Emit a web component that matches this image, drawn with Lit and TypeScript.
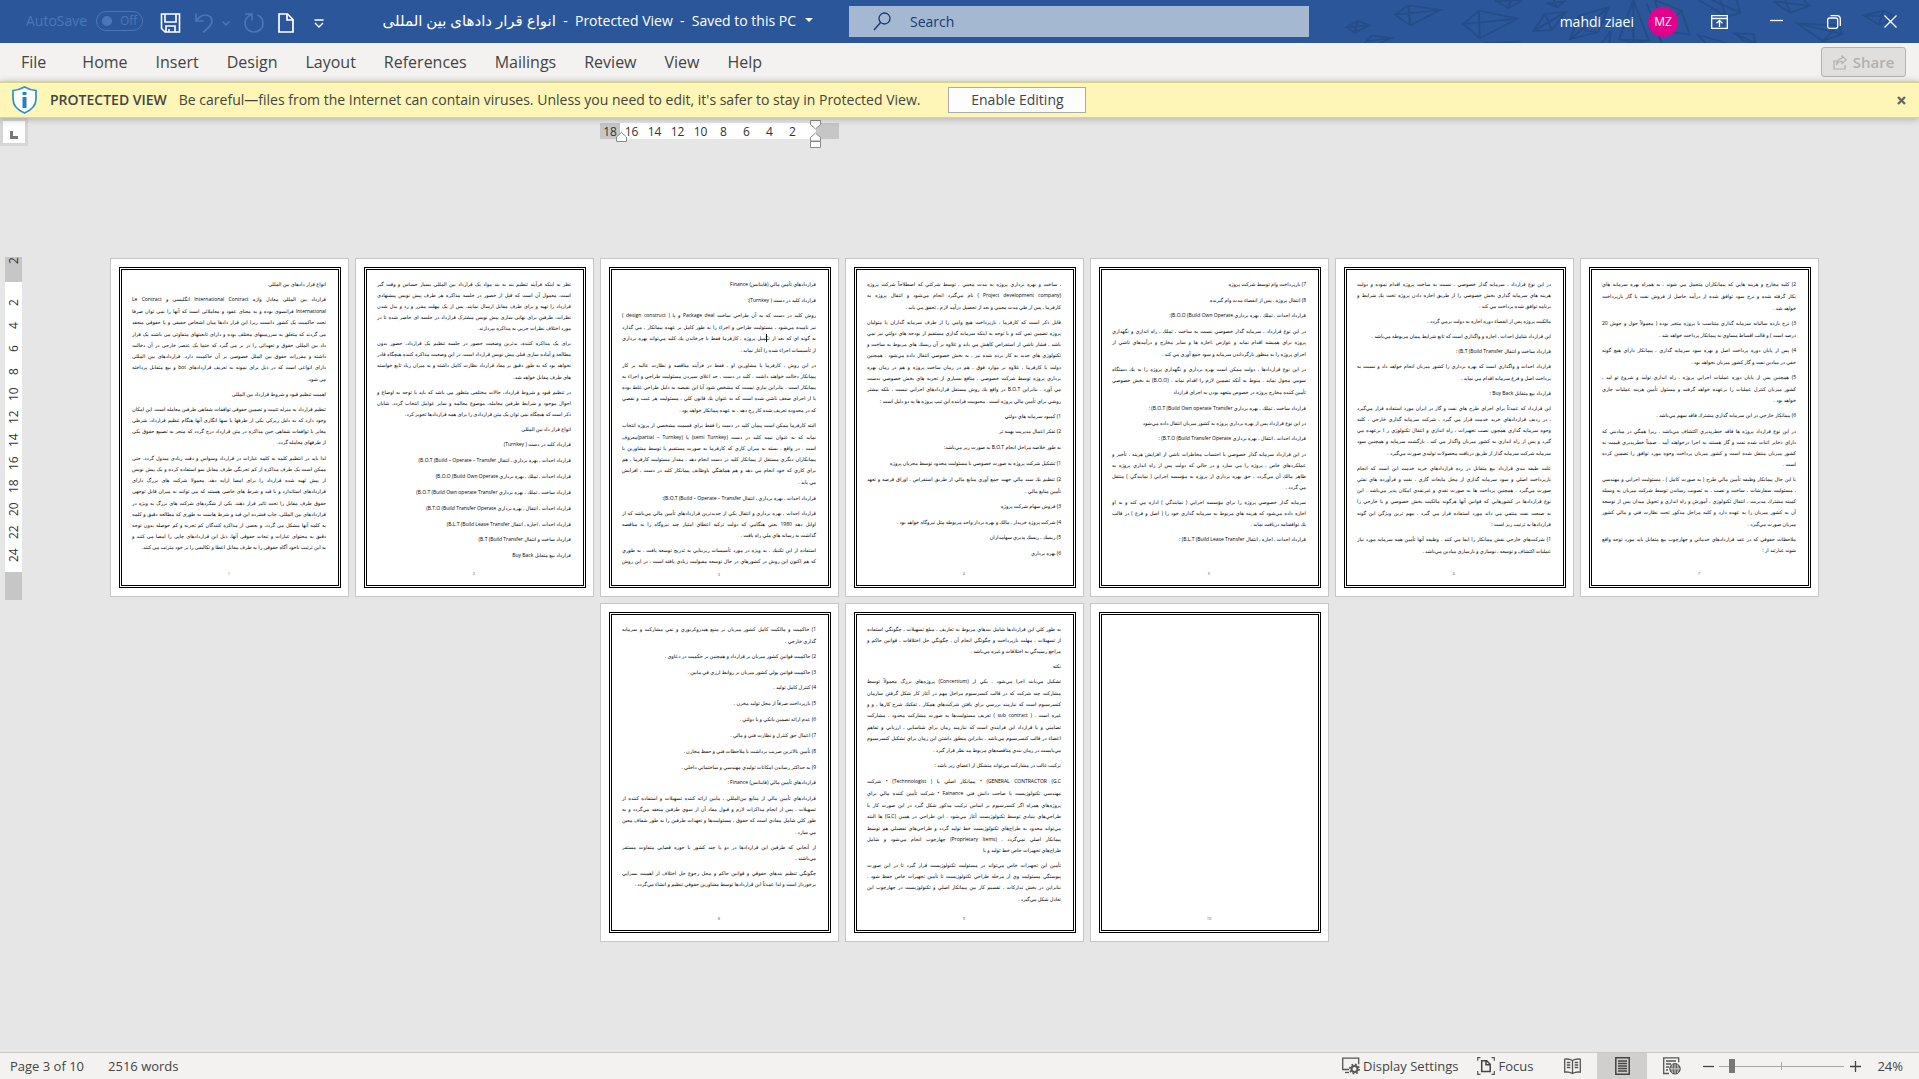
import { LitElement, html, css, svg } from "lit";
import { customElement, property } from "lit/decorators.js";
import { classMap } from "lit/directives/class-map.js";

/*
 * Page text. Every array entry is a paragraph, every row of it one line.
 * A leading "+" on a paragraph widens the space above it, a leading "~" marks a taller line.
 * "}" stands for a closing bracket that keeps the right-to-left direction.
 * A trailing "=" justifies the last line, for a paragraph that runs on to the next page.
 */
const PAGES: string[][] = [
  [
    `انواع قرار دادهای بین المللی`,
    `قرارداد بین المللی معادل واژه  International Contract  انگلیسی و  Le Contract
~International فرانسوی بوده و به  معنای عقود و معاملاتی است که آنها را نمی توان صرفا
تحت حاکمیت یک کشور دانست زیرا این قرار دادها میان اشخاص حقیقی و یا حقوقی منعقد
~می گردند که متعلق به سرزمینهای مختلف بوده و دارای تابعیتهای متفاوتی می باشند یک قرار
داد بین المللی حقوق و تعهداتی را در بر می گیرد که  حتما یک عنصر خارجی در آن دخالت
داشته و  مقررات حقوق بین الملل خصوصی  بر آن حاکمیت دارد. قراردادهای بین المللی
دارای انواعی است که در ذیل  برای نمونه به تعریف قراردادهای bot و بیع متقابل پرداخته
~می شود.`,
    `اهمیت تنظیم قیود و شروط قرارداد بین المللی`,
    `تنظیم قرارداد به منزله تثبیت و تضمین حقوقی توافقات شفاهی طرفین معامله است. این امکان
وجود دارد که به دلیل زیرکی یکی از طرفها یا سها انگاری آنها هنگام تنظیم قرارداد، شرطی
مغایر با توافقات شفاهی حین مذاکره در متن قرارداد درج گردد که منجر به تضییع حقوق یکی
از طرفهای معامله گردد.`,
    `+لذا باید در انتظیم کلمه به کلمه عبارات در قرارداد وسواس و دقت زیادی مبذول گردد. حتی
ممکن است یک طرف مذاکره از کم تجربگی طرف مقابل سو استفاده کرده و یک پیش نویس
از پیش تهیه شده قرارداد را برای امضا ارایه دهد. معمولا شرکت های بزرگ دارای
قراردادهای استاندارد و با قید و شرط های خاصی هستند که می توانند به میزان قابل توجهی
~حقوق طرف مقابل را تحت تاثیر قرار دهند. یکی از شگردهای شرکت های بزرگ به ویژه در
قراردادهای بین المللی، چاپ فشرده این قید و شرط هاست به طوری که مطالعه دقیق و کلمه
به کلمه آنها مشکل می گردد. و بعضی از مذاکره کنندگان کم تجربه و کم حوصله بدون توجه
دقیق به محتوای عبارات و تبعات حقوقی آنها، ذیل این قراردادهای چاپی را امضا می کنند و
به این ترتیب ناخود آگاه حقوقی را به طرف مقابل اعطا و تکالیفی را بر خود مترتب می کنند.`,
  ],
  [
    `نظر به اینکه فرآیند تنظیم بند به بند مواد یک قرارداد بین المللی بسیار حساس و وقت گیر
است، معمول آن است که قبل از حضور در جلسه مذاکره هر طرف پیش نویس پیشنهادی
قرارداد را تهیه و برای طرف مقابل ارسال نمایند. پس از یک مهلت مقرر و رد و بدل شدن
نظرات، طرفین برای نهایی سازی پیش نویس مشترک قرارداد در جلسه ای حاضر شده تا در
مورد اختلاف نظرات جزیی به مذاکره بپردازند.`,
    `برای یک مذاکره کننده، بدترین وضعیت حضور در جلسه تنظیم یک قرارداد، حضور بدون
مطالعه و آماده سازی قبلی پیش نویس قرارداد است. در این وضعیت مذاکره کننده هیچگاه قادر
نخواهد بود که به طور دقیق بر مفاد قرارداد نظارت کامل داشته و به میزان زیاد تابع خواسته
~های طرف مقابل خواهد شد.`,
    `در تنظیم قیود و شروط قرارداد، حالات مختلفی متظور می باشد که باید با توجه به اوضاع و
احوال موجود و شرایط طرفین معامله، موضوع معالمه و سایر عوامل انتخاب گردد. شایان
ذکر است که هیچگاه نمی توان یک متن قراردادی را برای همه قراردادها تجویز کرد.`,
    `انواع قرار داد بین المللی`,
    `قرارداد كليد در دست ( Turnkey)`,
    `+قرارداد احداث , بهره برداري , انتقال  B.O.T (Build – Operate – Transfer}`,
    `+قرارداد احداث , تملك , بهره برداري  B.O.O (Build Own Operate}`,
    `+قرارداد ساخت , تملك , بهره برداري B.O.T (Build Own operate Transfer}`,
    `+قرارداد احداث , انتقال , بهره برداري B.T.O (Build Transfer Operate}`,
    `+قرارداد احداث , اجاره , انتقال B.L.T (Build Lease Transfer}`,
    `قرارداد ساخت و انتقال B.T (Build Transfer}`,
    `+قرارداد بيع متقابل Buy Back`,
  ],
  [
    `قراردادهاي تأمين مالي (فاينانس) Finance`,
    `+قرارداد كليد در دست ( Turnkey):`,
    `روش كليد در دست كه به آن طراحي  ساخت  Package deal و يا ( design construct )
~نيز ناميده مي‌شود , مسئوليت طراحي و اجراء را به طور كامل بر عهده پيمانكار , مي گذارد
به گونه اي كه بعد از تكميل پروژه , كارفرما فقط با چرخاندن يك كليد مي‌تواند بهره برداري
~از تأسيسات اجراء شده را آغاز نمايد .`,
    `در اين روش , كارفرما يا مشاورين او , فقط در فرآيند مناقصه و نظارت عاليه بر كار
پيمانكار دخالت خواهند داشت . كليد در دست , حد اعلاي سپردن مسئوليت طراحي و اجراء به
پيمانكار است . بنابراين نيازي نيست كه مشخص شود آيا اين نقيصه به دليل طراحي غلط بوده
يا از اجراي ضعف ناشي شده است كه به عنوان يك قانون كلي , مسئوليت هر عيب و نقصي
~كه در محدوده تعريف شده كار رخ دهد , به عهده پيمانكار خواهد بود .`,
    `البته كارفرما ممكن است پيمان كليد در دست را فقط براي قسمت مشخصي از پروژه انتخاب
~نمايد كه به عنوان نيمه كليد در دست  (semi Turnkey) يا (partial – Turnkey)معروف
است . در واقع , بسته به ميزان كاري كه كارفرما به صورت مستقيم يا توسط مشاورين يا
پيمانكاران ديگري مستقل از پيمانكار كليد در دست انجام دهد , مقدار مسئوليت كارفرما , هم
براي كاري كه خود انجام مي دهد و هم هماهنگي باوظايف پيمانكار كليد در دست , افزايش
~مي يابد .`,
    `+قرارداد احداث , بهره برداري , انتقال B.O.T (Build – Operate – Transfer}:`,
    `قرارداد احداث , بهره برداري و انتقال يكي از جديدترين قراردادهاي تأمين مالي مي‌باشد كه از
اوايل دهه 1980 يعني هنگامي كه دولت تركيه اعطاي امتياز چند نيروگاه را به مناقصه
گذاشت به رسانه هاي ملي راه يافت .`,
    `استفاده از اين تكنيك , به ويژه در مورد تأسيسات زيربنايي به تدريج توسعه يافت . به طوري
كه هم اكنون اين روش در كشورهاي در حال توسعه مقبوليت زيادي يافته است . در اين روش=`,
  ],
  [
    `, ساخت و بهره برداري پروژه به مدت معيني , توسط شركتي كه اصطلاحاً شركت پروژه
(Project development company ) نام مي‌گيرد انجام مي‌شود و انتقال پروژه به
~كارفرما , پس از طي مدت معيني و بعد از تحصيل درآمد لازم , تحقق مي يابد .`,
    `قابل ذكر است كه كارفرما , بازپرداخت هيچ وامي را از طرف سرمايه گذاران يا متوليان
پروژه تضمين نمي كند و با توجه به اينكه سرمايه گذاري مستقيم از بودجه هاي دولتي نيز نمي
باشد , فشار ناشي از استقراض كاهش مي يابد و علاوه بر آن ريسك هاي مربوط به ساخت و
تكنولوژي هاي جديد به كار برده شده نيز , به بخش خصوصي انتقال داده مي‌شود . همچنين
~دولت يا كارفرما , علاوه بر موارد فوق , هم در زمان ساخت پروژه و هم در زمان بهره
برداري پروژه توسط شركت خصوصي , منافع بسياري از تجربه هاي بخش خصوصي بدست
مي آورد . بنابراين B.O.T در واقع يك روش مستقل قراردادهاي اجرايي نيست , بلكه بيشتر
~روشي براي تأمين مالي پروژه است . محبوبيت فزاينده اين تيپ پروژه ها به دو دليل است :`,
    `1) كمبود سرمايه هاي دولتي`,
    `2) تفكر اعمال مديريت بهينه تر`,
    `+به طور خلاصه مراحل انجام B.O.T به صورت زير مي‌باشد:`,
    `+1) تشكيل شركت پروژه به صورت خصوصي با مسئوليت محدود توسط مجريان پروژه`,
    `+2) تنظيم يك سند مالي جهت جمع آوري منابع مالي از طريق استقراض , اوراق قرضه و تعهد
~تأمين منابع مالي .`,
    `3) فروش سهام شركت پروژه`,
    `+4) شركت پروژه خريدار , مالك و بهره بردار واحد مربوطه مثل نيروگاه خواهد بود .`,
    `5) ريسك , ريسك پذيري سهامداران`,
    `+6) بهره برداري`,
  ],
  [
    `7) بازپرداخت وام توسط شركت پروژه`,
    `+8) انتقال پروژه , پس از انقضاء مدت وام گيرنده`,
    `قرارداد احداث , تملك , بهره برداري B.O.O (Build Own Operate}:`,
    `+در اين نوع قرارداد , سرمايه گذار خصوصي نسبت به ساخت , تملك , راه اندازي و نگهداري
پروژه براي هميشه اقدام نمايد و عوارض ,اجاره ها و ساير مخارج و درآمدهاي ناشي از
~اجراي پروژه را به منظور بازگرداندن سرمايه و سود جمع آوري مي كند .`,
    `در اين نوع قراردادها , دولت ممكن است بهره برداري و نگهداري پروژه را به يك دستگاه
سومي محول نمايد . منوط به آنكه تضمين لازم را اقدام نمايد . (B.O.O) به بخش خصوصي
~تأمين كننده مخارج پروژه در خصوص متعهد بودن به اجراي قرارداد`,
    `+قرارداد ساخت , تملك , بهره برداري B.O.T (Build Own operate Transfer} :`,
    `در اين نوع قرارداد پس از بهره برداري پروژه به كشور ميزبان انتقال داده مي‌شود`,
    `قرارداد احداث , انتقال , بهره برداري B.T.O (Build Transfer Operate} :`,
    `+در اين قرارداد سرمايه گذار خصوصي با احتساب مخاطرات ناشي از افزايش هزينه , تأخير و
عملكردهاي خاص , پروژه را مي سازد و در حالي كه دولت پس از راه اندازي پروژه به
ظاهر مالك آن مي‌گردد , حق بهره برداري از پروژه به مؤسسه اجرايي ( نمايندگي ) منتقل
مي گردد .`,
    `سرمايه گذار خصوصي پروژه را براي مؤسسه اجرايي ( نمايندگي ) اداره مي كند و به او
اجازه داده مي‌شود كه هزينه هاي مربوط به سرمايه گذاري خود را ( اصل و فرع ) در قالب
يك توافقنامه دريافت نمايد .`,
    `قرارداد احداث , اجاره , انتقال B.L.T (Build Lease Transfer} :`,
  ],
  [
    `در اين نوع قرارداد , سرمايه گذار خصوصي , نسبت به ساخت پروژه اقدام نموده و دولت
هزينه هاي سرمايه گذاري بخش خصوصي را از طريق اجاره دادن پروژه تحت يك شرايط و
برنامه توافق شده پرداخت مي كند .`,
    `مالكيت پروژه پس از انقضاء دوره اجاره به دولت برمي گردد .`,
    `اين قرارداد شامل احداث , اجاره و واگذاري است كه تابع شرايط پيمان مربوطه مي‌باشد .`,
    `قرارداد ساخت و انتقال B.T (Build Transfer} :`,
    `قرارداد احداث و واگذاري است كه بهره برداري را كشور ميزبان انجام خواهد داد و نسبت به
~پرداخت اصل و فرع سرمايه اقدام مي نمايد .`,
    `قرارداد بيع متقابل Buy Back :`,
    `اين قرارداد كه عمدتاً براي اجراي طرح هاي نفت و گاز در ايران مورد استفاده قرار مي‌گيرد
, در رديف قراردادهاي خريد خدمت قرار مي گيرد , شركت سرمايه گذاري خارجي , كليه
وجوه سرمايه گذاري همچون نصب تجهيزات , راه اندازي و انتقال تكنولوژي ر ا برعهده مي
گيرد و پس از راه اندازي به كشور ميزبان واگذار مي كند . بازگشت سرمايه و همچنين سود
~سرمايه شركت سرمايه گذار از طريق دريافت محصولات توليدي صورت مي‌گيرد .`,
    `علت طبقه بندي قرارداد بيع متقابل در رده قراردادهاي خريد خدمت اين است كه انجام
بازپرداخت اصلي و سود سرمايه گذاري از محل مايعات گازي , نفت و فرآورده هاي نفتي
صورت مي‌گيرد . همچنين پرداخت ها به صورت نقدي و غيرنقدي امكان پذير مي‌باشد . اين
نوع قراردادها در كشورهايي كه قوانين آنها هرگونه مالكيت بخش خصوصي و يا خارجي را
~به صنعت نفت منتفي مي داند مورد استفاده قرار مي گيرد . مهم ترين ويژگي اين گونه
قراردادها به ترتيب زير است :`,
    `1) شركت‌هاي خارجي نقش پيمانكار را ايفا مي كنند . وظيفه آنها تأمين همه سرمايه مورد نياز
~عمليات اكتشاف و توسعه , نوسازي و بازسازي ميادين مي‌باشد .`,
  ],
  [
    `2) كليه مخارج و هزينه هايي كه پيمانكاران متحمل مي شوند , به همراه بهره سرمايه هاي
~بكار گرفته شده و نرخ سود توافق شده از درآمد حاصل از فروش نفت يا گاز بازپرداخت
~خواهد شد .`,
    `3) نرخ بازده ساليانه سرمايه گذاري متناسب با پروژه متغير بوده ( معمولاً حول و حوش 20
~درصد است ) و قالب اقساط مساوي به پيمانكار پرداخت خواهد شد .`,
    `4) پس از پايان دوره پرداخت اصل و بهره سود سرمايه گذاري , پيمانكار داراي هيچ گونه
~حقي در ميادين نفت و گاز كشور ميزبان نخواهد بود .`,
    `5) همچنين پس از پايان دوره عمليات اجرايي پروژه , راه اندازي توليد و شروع تو ليد ,
~كشور ميزبان كنترل عمليات را برعهده خواهد گرفت و مسئول تأمين هزينه عمليات جاري
خواهد بود .`,
    `6) پيمانكار خارجي در اين سرمايه گذاري مشترك فاقد سهم مي‌باشد .`,
    `+در اين نوع قرارداد پروژه ها فاقد خطرپذيري اكتشاف مي‌باشد . زيرا همگي در مياديني كه
داراي ذخاير اثبات شده نفت و گاز هستند به اجرا درخواهند آمد . ضمناً خطرپذيري قيمت به
كشور ميزبان منتقل شده است و كشور ميزبان پرداخت وجوه مورد توافق را تضمين كرده
است .`,
    `با اين حال پيمانكار وظيفه تأمين مالي طرح ( به صورت كامل ) , مسئوليت اجرايي و مهندسي
, مسئوليت سفارشات , ساخت و نصب , به تصويب رساندن توسط شركت ميزبان به وسيله
كميته مشترك مديريت , انتقال تكنولوژي , آموزش و راه اندازي و تحويل ميدان پس از توسعه
آن به كشور ميزبان را به عهده دارد و كليه مراحل مذكور تحت نظارت فني و مالي كشور
~ميزبان صورت مي‌گيرد .`,
    `ملاحظات حقوقي كه در عقد قراردادهاي خدماتي و چهارچوب بيع متقابل بايد مورد توجه واقع
شوند عبارتند از :`,
  ],
  [
    `1) حاكميت و مالكيت كامل كشور ميزبان بر منبع هيدروكربوري و نفي مشاركت و سرمايه
~گذاري خارجي .`,
    `2) حاكميت قوانين كشور ميزبان بر قرارداد و همچنين بر حكميت در دعاوي .`,
    `+3) حاكميت قوانين پولي كشور ميزبان بر روابط ارزي في مابين .`,
    `4) كنترل كامل توليد .`,
    `+5) بازپرداخت صرفاً از محل توليد مخزن .`,
    `+6) عدم ارائه تضمين بانكي و يا دولتي .`,
    `+7) اعمال حق كنترل و نظارت فني و مالي .`,
    `+8) تأمين بالاترين ضريب برداشت با ملاحظات فني و حفظ مخازن .`,
    `+9) به حداكثر رساندن امكانات توليدي مهندسي و ساختماني داخلي .`,
    `قراردادهاي تأمين مالي (فاينانس) Finance :`,
    `+قراردادهاي تأمين مالي از منابع بين‌المللي , مابين ارائه كننده تسهيلات و استفاده كننده از
تسهيلات , پس از انجام مذاكرات لازم و قبول مفاد آن از سوي طرفين منعقد مي‌گردد و به
طور كلي شامل مفادي است كه حقوق , مسئوليت‌ها و تعهدات طرفين را به طور شفاف معين
~مي سازد .`,
    `از آنجايي كه طرفين اين قراردادها در دو يا چند كشور با حوزه قضايي متفاوت مستقر
مي‌باشند .`,
    `چگونگي تنظيم بندهاي حقوقي و قوانين حاكم و محل رجوع حل اختلاف از اهميت بسزايي
برخوردار است و لذا عمدتاً اين قراردادها توسط مشاورين حقوقي تنظيم و انشاء مي‌گردد .`,
  ],
  [
    `به طور كلي اين قراردادها شامل بندهاي مربوط به تعاريف , مبلغ تسهيلات , چگونگي استفاده
از تسهيلات , مهلت بازپرداخت و چگونگي انجام آن , چگونگي حل اختلافات , قوانين حاكم و
مراجع رسيدگي به اختلافات و غيره مي‌باشد .`,
    `نكته`,
    `تشكيل مي‌يابند اجرا مي‌شود . يكي از (Concertium) پروژه‌هاي بزرگ معمولاً توسط
~مشاركت چند شركت كه در قالب كنسرسيوم مراحل مهم در آغاز كار شكل گرفتن سازمان
كنسرسيوم است كه نيازمند بررسي براي يافتن شركت‌هاي همكار , تفكيك شرح كارها , و و
غيره است . ( sub contract ) تعريف مسئوليت‌ها به صورت مشاركت محدود , مشاركت
~تضامني و يا قرارداد اين فرايندي است كه نيازمند زمان براي شناسايي , ارزيابي و تفاهم
اعضاء در قالب كنسرسيوم مي‌باشد . بنابراين منظور داشتن اين زمان براي تشكيل كنسرسيوم
~مي‌بايست در زمان بندي مناقصه‌هاي مربوط مد نظر قرار گيرد .`,
    `تركيب غالب در مشاركت مي‌تواند متشكل از اعضاي زير باشد :`,
    `+GENERAL CONTRACTOR (G.C} • پيمانكار اصلي يا ( Technnologist) • شركت
~مهندسي تكنولوژيست يا صاحب دانش فني Fainance • شركت تأمين كننده مالي براي
~پروژه‌هاي همراه اگر كنسرسيوم بر اساس تركيب مذكور شكل گيرد در اين صورت كار با
طراحي‌هاي بنيادي توسط تكنولوژيست آغاز مي‌شود . اين طراحي در همين (G.C) ها البته
~مي‌تواند محدود به طراح‌هاي تكنولوژيست خط توليد گردد و طراحي‌هاي تفضيلي هم توسط
پيمانكار اصلي نمي‌گردد . (Proprietary Items) چهارچوب انجام مي‌شود و شامل
طراح‌هاي تجهيزات خاص خط توليد و يا`,
    `تأمين اين تجهيزات خاص مي‌تواند در مسئوليت تكنولوژيست قرار گيرد تا در اين صورت
پيوستگي مسئوليت وي از مرحله طراحي تكنولوژيست تا تأمين تجهيزات خاص حفظ شود .
بنابراين در بخش تداركات , تقسيم كار بين پيمانكار اصلي و تكنولوژيست در چهارچوب اين
~تعادل شكل مي‌گيرد .`,
  ],
  [],
];

const CARET_PAGE = 3;

const icons = {
  save: svg`<svg width="21" height="20" viewBox="0 0 20 20"><path d="M1 1h18v18H4.500L1 15.500zM4.500 1v8h11V1M5.500 19v-6h9v6M8.500 16v3" fill="none" stroke="#fff" stroke-width="1.600"/></svg>`,
  undo: svg`<svg width="18" height="20" viewBox="0 0 18 20"><path d="M1 .5V8h7.500M1 8C4 4 7 2 10.500 2c4 0 6.500 3 6.500 6.500 0 4-4.500 7-9 11" fill="none" stroke="#4a77b8" stroke-width="1.700"/></svg>`,
  chevron: svg`<svg width="8" height="5" viewBox="0 0 8 5"><path d="M.5.5L4 4 7.500.5" fill="none" stroke="#4a77b8" stroke-width="1.500"/></svg>`,
  redo: svg`<svg width="20" height="20" viewBox="0 0 20 20"><path d="M1 1h7v6.500M8 1.500C3.500 3 1 6.500 1 10.500 1 15.500 5 19 10 19s9-3.500 9-8.500c0-4-2-7-5.500-8.500" fill="none" stroke="#4a77b8" stroke-width="1.700"/></svg>`,
  page: svg`<svg width="16" height="20" viewBox="0 0 16 20"><path d="M1 1h8.500L15 6.500V19H1zM9 1v6h6" fill="none" stroke="#fff" stroke-width="1.700"/></svg>`,
  more: svg`<svg width="10" height="9" viewBox="0 0 10 9"><path d="M.5 1h9M1 4l4 4 4-4" fill="none" stroke="#fff" stroke-width="1.400"/></svg>`,
  search: svg`<svg width="18" height="19" viewBox="0 0 18 19"><circle cx="11.500" cy="6.500" r="5.500" fill="none" stroke="#173a72" stroke-width="1.300"/><path d="M7.500 10.500L1 18" stroke="#173a72" stroke-width="1.400"/></svg>`,
  ribbon: svg`<svg width="17" height="14" viewBox="0 0 17 14"><path d="M.7.700h15.600v12.600H.7zM.7 3.500h15.600M8.500 12V5.500M5.500 8.200l3-2.800 3 2.800" fill="none" stroke="#fff" stroke-width="1.300"/></svg>`,
  minimize: svg`<svg width="13" height="13" viewBox="0 0 13 13"><path d="M0 5.500h13" stroke="#fff" stroke-width="1.300"/></svg>`,
  restore: svg`<svg width="14" height="14" viewBox="0 0 14 14"><rect x=".7" y="3" width="10" height="10.300" rx="2" fill="none" stroke="#fff" stroke-width="1.300"/><path d="M3.500.7H10q3.300 0 3.300 3.300v7" fill="none" stroke="#fff" stroke-width="1.300"/></svg>`,
  close: svg`<svg width="13" height="13" viewBox="0 0 13 13"><path d="M.5.5l12 12M12.500.5l-12 12" stroke="#fff" stroke-width="1.300"/></svg>`,
  share: svg`<svg width="14" height="15" viewBox="0 0 14 15"><path d="M4 6H1v8h11v-4" fill="none" stroke="#b1afad" stroke-width="1.200"/><path d="M9 1l4.300 3.800L9 8.500V6.300Q5.500 6.200 3.500 10 4 4 9 3.400z" fill="none" stroke="#b1afad" stroke-width="1.100"/></svg>`,
  shield: svg`<svg width="25" height="28" viewBox="0 0 25 28"><path d="M12.500 1Q18 4 24 4.500V13q0 9-11.500 14Q1 22 1 13V4.500Q7 4 12.500 1z" fill="#fff" stroke="#2b8fd0" stroke-width="1.700"/><path d="M12.500 6v3M12.500 11v11" stroke="#1e83c8" stroke-width="4"/></svg>`,
  dismiss: svg`<svg width="9" height="9" viewBox="0 0 9 9"><path d="M1 1l7 7M8 1L1 8" stroke="#666" stroke-width="2.400"/></svg>`,
  corner: svg`<svg width="8" height="8" viewBox="0 0 8 8"><path d="M1.500 0v6.500H8" fill="none" stroke="#777" stroke-width="3"/></svg>`,
  indent: svg`<svg width="11" height="10" viewBox="0 0 11 10"><path d="M.5 9.500V5l5-4.500 5 4.500v4.500z" fill="#fff" stroke="#8a8a8a"/></svg>`,
  indentPair: svg`<svg width="11" height="28" viewBox="0 0 11 28"><path d="M.5.5h10V4.500l-5 4.500-5-4.500zM.5 21V17.500l5-4.500 5 4.500V21zM.5 21.500h10v6H.5z" fill="#fff" stroke="#8a8a8a"/></svg>`,
  display: svg`<svg width="18" height="18" viewBox="0 0 18 18"><path d="M7 12.500H.7V1.200h16v6" fill="none" stroke="#555" stroke-width="1.300"/><path d="M3 15.500h4" stroke="#555" stroke-width="1.300"/><circle cx="12.500" cy="12" r="3" fill="none" stroke="#555" stroke-width="2"/><circle cx="12.500" cy="12" r="4.600" fill="none" stroke="#555" stroke-width="1.700" stroke-dasharray="1.800 1.800"/></svg>`,
  focus: svg`<svg width="18" height="18" viewBox="0 0 18 18"><path d="M3.500.7H.7v3M14.500.7h2.800v3M.7 14v3.300h2.800M17.300 14v3.300h-2.800" fill="none" stroke="#555" stroke-width="1.200"/><path d="M4.700 3.700h5l3.500 3.500v7.300H4.700zM9 3.700v4h4" fill="none" stroke="#444" stroke-width="1.500"/></svg>`,
  read: svg`<svg width="17" height="17" viewBox="0 0 17 17"><path d="M8.500 2.500Q5 .5.700 1.200v13Q5 13.500 8.500 15.500 12 13.500 16.300 14.200v-13Q12 .5 8.500 2.500zv13.500" fill="none" stroke="#555" stroke-width="1.300"/><path d="M2.800 4.500h3.500M2.800 7h3.500M2.800 9.500h3.500M10.700 4.500h3.500M10.700 7h3.500M10.700 9.500h3.500" stroke="#555" stroke-width="1.300"/></svg>`,
  print: svg`<svg width="15" height="18" viewBox="0 0 15 18"><path d="M.8.800h13.400v16.400H.8z" fill="none" stroke="#444" stroke-width="1.500"/><path d="M3 4h9M3 6.500h9M3 9h9M3 11.500h9M3 14h9" stroke="#444" stroke-width="1.300"/></svg>`,
  web: svg`<svg width="18" height="18" viewBox="0 0 18 18"><path d="M6 16.500H.7V.8h15v4.500M3 4h10M3 7h5M3 10h3M3 13h2" fill="none" stroke="#555" stroke-width="1.300"/><circle cx="12" cy="11.800" r="5.200" fill="#666" stroke="#444"/><path d="M7 11.800h10M12 6.800v10M9.500 7.500q-1.500 4.500 0 8.600M14.500 7.500q1.500 4.500 0 8.600" fill="none" stroke="#e4e4e4" stroke-width=".8"/></svg>`,
  minus: svg`<svg width="11" height="11" viewBox="0 0 11 11"><path d="M0 5.500h11" stroke="#444" stroke-width="1.300"/></svg>`,
  plus: svg`<svg width="11" height="11" viewBox="0 0 11 11"><path d="M0 5.500h11M5.500 0v11" stroke="#444" stroke-width="1.300"/></svg>`,
};

@customElement("doc-sheet")
class DocSheet extends LitElement {
  @property({ attribute: false }) paragraphs: string[] = [];
  @property({ type: Number }) number = 1;

  static styles = css`
    :host {
      display: flex;
      box-sizing: border-box;
      width: 239px;
      height: 339px;
      padding: 8px 7px 8px 8px;
      border: 1px solid #c6c6c6;
      background: #fff;
    }
    .frame {
      flex: 1;
      min-width: 0;
      display: flex;
      flex-direction: column;
      position: relative;
      border: 3px double #000;
      padding: 9px 12px 7px 10px;
      font: 5px/11px "Open Sans", "DejaVu Sans", sans-serif;
      color: #000;
    }
    p {
      margin: 0 0 4px;
      white-space: nowrap;
    }
    p.wide {
      margin-top: 1px;
    }
    .line {
      display: block;
      white-space: normal;
      height: 11px;
    }
    .full {
      text-align: justify;
      text-align-last: justify;
    }
    .tall {
      height: 12px;
      line-height: 12px;
    }
    .number {
      margin-top: auto;
      font-size: 4px;
      line-height: 8px;
      text-align: center;
      color: #555;
    }
    .caret {
      position: absolute;
      left: 154px;
      top: 64px;
      width: 1px;
      height: 8px;
      background: #000;
    }
  `;

  private line(raw: string, last: boolean) {
    const tall = raw.startsWith("~");
    const open = raw.endsWith("=");
    const text = raw.replace(/[~=]/g, "").replace(/\}/g, "\u2067)\u2069");
    return html`<span class=${classMap({ line: true, tall, full: !last || open })}>${text}</span>`;
  }

  render() {
    return html`<div class="frame" dir="rtl" lang="fa">
      ${this.paragraphs.map((p) => {
        const rows = p.replace(/^\+/, "").split("\n");
        return html`<p class=${classMap({ wide: p.startsWith("+") })}>
          ${rows.map((r, i) => this.line(r, i === rows.length - 1))}
        </p>`;
      })}
      ${this.number === CARET_PAGE ? html`<span class="caret"></span>` : null}
      <span class="number">${this.number}</span>
    </div>`;
  }
}

@customElement("app-root")
class AppRoot extends LitElement {
  static styles = css`
    :host {
      display: flex;
      flex-direction: column;
      height: 100vh;
      overflow: hidden;
      background: #e6e6e6;
      color: #444;
      font: 14px/20px "Open Sans", "Noto Sans", "DejaVu Sans", sans-serif;
    }
    button {
      border: 0;
      padding: 0;
      background: none;
      color: inherit;
      font: inherit;
      display: flex;
      align-items: center;
      justify-content: center;
    }
    svg {
      display: block;
      flex: none;
    }
    .titlebar {
      position: relative;
      flex: none;
      display: grid;
      grid-template-columns: minmax(0, 849fr) minmax(0, 460fr) minmax(0, 610fr);
      align-items: center;
      height: 43px;
      background: #2b579a;
      color: #fff;
    }
    .pattern {
      position: absolute;
      right: 0;
      top: 0;
    }
    .quick {
      display: flex;
      align-items: center;
      padding: 0 36px 0 26px;
      white-space: nowrap;
    }
    .autosave {
      display: flex;
      align-items: center;
      gap: 9px;
      padding-bottom: 2px;
      color: #4a77b8;
    }
    .switch {
      box-sizing: border-box;
      width: 47px;
      height: 20px;
      border: 1px solid #4a77b8;
      border-radius: 10px;
      gap: 8px;
      font-size: 12px;
      line-height: 18px;
    }
    .knob {
      width: 10px;
      height: 10px;
      border-radius: 5px;
      background: #4a77b8;
    }
    .tools {
      display: flex;
      align-items: center;
      padding-top: 3px;
      margin-left: 17px;
    }
    .gap-s {
      margin-left: 9px;
    }
    .gap-m {
      margin-left: 14px;
    }
    .gap-l {
      margin-left: 20px;
    }
    .doc {
      margin-left: auto;
      display: flex;
      align-items: center;
      gap: 9px;
      white-space: pre;
      padding-bottom: 3px;
    }
    .doc bdi {
      font-size: 15px;
    }
    .down {
      border: 4px solid transparent;
      border-top-color: #fff;
      border-bottom: 0;
    }
    .search {
      position: relative;
      display: flex;
      align-items: center;
      gap: 19px;
      height: 31px;
      padding-left: 24px;
      background: #a5b8d1;
    }
    .search input {
      flex: 1;
      min-width: 0;
      border: 0;
      padding: 0;
      background: none;
      font: inherit;
      color: #173a72;
      outline: 0;
    }
    .search input::placeholder {
      color: #173a72;
      opacity: 1;
    }
    .account {
      position: relative;
      display: flex;
      align-items: center;
      justify-content: flex-end;
    }
    .avatar {
      width: 30px;
      height: 30px;
      margin-left: 14px;
      margin-right: 13px;
      border-radius: 50%;
      background: #e3008c;
      font-size: 12px;
      line-height: 30px;
      text-align: center;
    }
    .window {
      width: 57px;
      height: 43px;
    }
    .tabs {
      flex: none;
      display: flex;
      align-items: center;
      height: 38px;
      padding: 0 13px 0 7px;
      background: #f3f2f1;
      font-size: 16px;
    }
    .tab {
      padding: 0 14px;
      height: 38px;
    }
    .tab:first-child {
      margin-right: 8px;
    }
    .share {
      box-sizing: border-box;
      margin-left: auto;
      width: 85px;
      height: 30px;
      gap: 6px;
      border: 1px solid #b5b3b1;
      border-radius: 3px;
      background: #e1dfdd;
      color: #b1afad;
      font-size: 15px;
      font-weight: 600;
    }
    .notice {
      position: relative;
      z-index: 1;
      flex: none;
      box-sizing: border-box;
      display: flex;
      align-items: center;
      height: 37px;
      padding: 0 13px 0 12px;
      border: solid #d6d68c;
      border-width: 2px 0 1px;
      background: #fdf6b6;
      box-shadow: 0 1px 7px rgba(0, 0, 0, 0.25);
      white-space: nowrap;
    }
    .notice strong {
      margin: 0 12px 0 13px;
      font-weight: 600;
    }
    .enable {
      box-sizing: border-box;
      width: 138px;
      height: 26px;
      margin-left: 28px;
      border: 1px solid #ababab;
      background: #fdfdfd;
    }
    .dismiss {
      margin-left: auto;
    }
    .workspace {
      flex: 1;
      min-height: 0;
      display: grid;
      grid-template-columns: 22px minmax(0, 1fr);
      grid-template-rows: 139px minmax(0, 1fr);
      padding-right: 12px;
    }
    .corner {
      display: flex;
      box-sizing: border-box;
      width: 28px;
      height: 28px;
      padding: 10px 0 0 7px;
      border: 3px solid #d6d6d6;
      background: #fdfdfd;
    }
    .hruler-row {
      display: grid;
      grid-template-columns: repeat(7, 239px);
      gap: 6px;
      justify-content: center;
      align-items: start;
      padding-top: 5px;
      font-size: 12px;
      line-height: 17px;
      color: #333;
    }
    .hruler {
      position: relative;
      grid-column: 3;
      display: flex;
      height: 16px;
      background: linear-gradient(90deg, #c6c6c6 20px, #fff 20px 216px, #c6c6c6 216px);
    }
    .mark {
      flex: 0 0 23px;
      text-align: center;
    }
    .mark:first-child {
      flex-basis: 20px;
    }
    .left-indent {
      position: absolute;
      left: 16px;
      top: 9px;
    }
    .right-indent {
      position: absolute;
      left: 210px;
      top: -3px;
    }
    .vruler {
      display: flex;
      flex-direction: column;
      box-sizing: border-box;
      width: 17px;
      height: 343px;
      margin-left: 5px;
      background: linear-gradient(#c6c6c6 25px, #fff 25px 315px, #c6c6c6 315px);
      font-size: 12px;
      line-height: 17px;
      color: #333;
    }
    .vmark {
      flex: 0 0 23px;
      writing-mode: vertical-rl;
      transform: rotate(180deg);
      text-align: center;
    }
    .vmark:first-child {
      flex-basis: 34px;
      text-align: end;
    }
    .pages {
      display: flex;
      flex-wrap: wrap;
      justify-content: center;
      align-content: flex-start;
      gap: 6px;
      padding-top: 1px;
    }
    .status {
      flex: none;
      box-sizing: border-box;
      display: flex;
      align-items: center;
      height: 27px;
      padding: 0 16px 0 10px;
      border-top: 1px solid #c8c6c4;
      background: #f3f2f1;
      font-size: 13px;
      white-space: nowrap;
    }
    .words {
      margin-left: 24px;
    }
    .display {
      margin-left: auto;
      gap: 3px;
    }
    .focus {
      gap: 3px;
      margin: 0 14px 0 19px;
    }
    .view {
      width: 50px;
      height: 26px;
    }
    .view.on {
      background: #d0cfce;
    }
    .step {
      width: 22px;
      height: 26px;
    }
    .zoom {
      appearance: none;
      width: 125px;
      height: 16px;
      margin: 0;
      background: linear-gradient(#a6a6a6, #a6a6a6) 62px 4px / 1px 8px no-repeat,
        linear-gradient(#a6a6a6, #a6a6a6) 0 8px / 125px 1px no-repeat;
    }
    .zoom::-webkit-slider-thumb {
      appearance: none;
      width: 6px;
      height: 14px;
      background: #777;
    }
    .percent {
      margin-left: 11px;
    }
  `;

  private tabs = ["File", "Home", "Insert", "Design", "Layout", "References", "Mailings", "Review", "View", "Help"];

  private pattern() {
    return html`<svg class="pattern" width="639" height="43" viewBox="0 0 1568 129" preserveAspectRatio="none" aria-hidden="true">
      <g fill="none" stroke="#244c88" stroke-width="5">
        <path d="M163 82L190 62 219 76 184 98zM163 82L219 76M190 62L184 98" />
        <path d="M282 44L315 16 394 30 319 76zM282 44L394 30M315 16L319 76" />
        <path d="M450 72L488 32 583 56 490 115zM450 72L583 56M488 32L490 115" />
        <path d="M208 129L225 107 275 114 245 129M210 124L275 114" />
        <path d="M528 0L560 25 594 2M528 4L594 0M560 25L566 0" />
        <path d="M655 10L680 22 702 0M655 10L700 4M680 22L672 0" />
        <path d="M622 93L650 42 702 36 667 90zM622 93L702 36M650 42L667 90" />
        <path d="M712 118L732 48 806 22 780 96zM712 118L806 22M732 48L750 92 780 96" />
        <path d="M832 118L867 0 905 122 868 129zM867 0V129M790 129L812 92 808 129M832 118L905 122" />
        <path d="M900 10L936 129M920 0L985 32 1005 104 940 92zM985 32L940 92" />
        <path d="M1028 0L1095 50 1130 38 1120 0M1060 0L1130 38M1095 50L1080 0" />
        <path d="M1024 104L1096 129M1024 104L1045 129" />
        <path d="M1115 100L1162 102 1166 129 1140 124zM1115 100L1166 129" />
        <path d="M1210 4L1252 38 1300 18 1285 0M1210 4L1300 18M1252 38L1240 0" />
        <path d="M1268 70L1370 76 1380 102 1332 123zM1268 70L1380 102M1370 76L1332 123" />
        <path d="M1432 46L1480 32 1512 52 1470 74zM1432 46L1512 52M1480 32L1470 74" />
        <path d="M500 129L590 125" />
      </g>
    </svg>`;
  }

  render() {
    return html`
      <header class="titlebar">
        ${this.pattern()}
        <div class="quick">
          <div class="autosave">
            <span id="autosave">AutoSave</span>
            <button class="switch" role="switch" aria-checked="false" aria-labelledby="autosave" disabled>
              <span class="knob"></span>Off
            </button>
          </div>
          <div class="tools">
            <button aria-label="Save">${icons.save}</button>
            <button class="gap-m" aria-label="Undo">${icons.undo}</button>
            <button class="gap-s" aria-label="Undo history">${icons.chevron}</button>
            <button class="gap-m" aria-label="Redo">${icons.redo}</button>
            <button class="gap-m" aria-label="New document">${icons.page}</button>
            <button class="gap-l" aria-label="Customize toolbar">${icons.more}</button>
          </div>
          <button class="doc"><span><bdi>انواع قرار دادهای بین المللی</bdi>  -  Protected View  -  Saved to this PC</span><span class="down"></span></button>
        </div>
        <label class="search">${icons.search}<input type="text" placeholder="Search" aria-label="Search" /></label>
        <div class="account">
          <span>mahdi ziaei</span>
          <button class="avatar" aria-label="Account">MZ</button>
          <button class="window" aria-label="Ribbon display options">${icons.ribbon}</button>
          <button class="window" aria-label="Minimize">${icons.minimize}</button>
          <button class="window" aria-label="Restore">${icons.restore}</button>
          <button class="window" aria-label="Close">${icons.close}</button>
        </div>
      </header>
      <nav class="tabs">
        ${this.tabs.map((t) => html`<button class="tab">${t}</button>`)}
        <button class="share" disabled>${icons.share}Share</button>
      </nav>
      <section class="notice">
        ${icons.shield}
        <strong>PROTECTED VIEW</strong>
        <span>Be careful—files from the Internet can contain viruses. Unless you need to edit, it's safer to stay in Protected View.</span>
        <button class="enable">Enable Editing</button>
        <button class="dismiss" aria-label="Close message">${icons.dismiss}</button>
      </section>
      <main class="workspace">
        <div class="corner">${icons.corner}</div>
        <div class="hruler-row">
          <div class="hruler">
            ${[18, 16, 14, 12, 10, 8, 6, 4, 2].map((n) => html`<span class="mark">${n}</span>`)}
            <span class="left-indent">${icons.indent}</span>
            <span class="right-indent">${icons.indentPair}</span>
          </div>
        </div>
        <div class="vruler">
          ${[2, 2, 4, 6, 8, 10, 12, 14, 16, 18, 20, 22, 24].map((n) => html`<span class="vmark">${n}</span>`)}
        </div>
        <div class="pages">
          ${PAGES.map((p, i) => html`<doc-sheet .paragraphs=${p} .number=${i + 1}></doc-sheet>`)}
        </div>
      </main>
      <footer class="status">
        <span>Page 3 of 10</span>
        <span class="words">2516 words</span>
        <button class="display">${icons.display}Display Settings</button>
        <button class="focus">${icons.focus}Focus</button>
        <button class="view" aria-label="Read mode">${icons.read}</button>
        <button class="view on" aria-label="Print layout">${icons.print}</button>
        <button class="view" aria-label="Web layout">${icons.web}</button>
        <button class="step" aria-label="Zoom out">${icons.minus}</button>
        <input class="zoom" type="range" min="0" max="100" value="8" aria-label="Zoom" />
        <button class="step" aria-label="Zoom in">${icons.plus}</button>
        <span class="percent">24%</span>
      </footer>
    `;
  }
}
